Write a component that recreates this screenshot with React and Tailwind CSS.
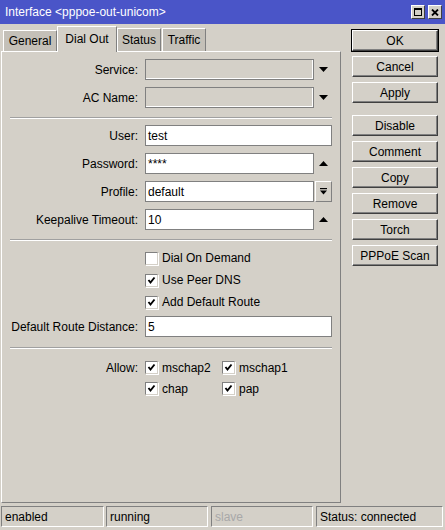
import React from "react";

function Tri({ up }) {
  return (
    <svg width="9" height="5" viewBox="0 0 9 5">
      <polygon points={up ? "0,5 9,5 4.5,0" : "0,0 9,0 4.5,5"} fill="#000" />
    </svg>
  );
}

function Check({ on }) {
  return (
    <div className="flex h-[13px] w-[13px] shrink-0 items-center justify-center border border-t-[#808080] border-l-[#808080] border-b-[#d4d0c8] border-r-[#d4d0c8] bg-white shadow-[1px_1px_0_#fff]">
      {on ? (
        <svg width="9" height="9" viewBox="0 0 9 9">
          <polyline points="1.5,4 3.5,6.5 7.5,1.5" fill="none" stroke="#000" strokeWidth="1.9" />
        </svg>
      ) : null}
    </div>
  );
}

function Field({ label, value, trailing, full, disabled }) {
  return (
    <div className="flex h-[21px] items-center">
      <div className="w-[136px] text-right">{label}</div>
      <div
        className={`ml-[7px] flex h-[21px] items-center border border-[#808080] pl-[2px] ${
          full ? "w-[187px]" : "w-[169px]"
        } ${disabled ? "bg-[#d4d0c8] shadow-[inset_-1px_-1px_0_#fff]" : "bg-white"}`}
      >
        {value}
      </div>
      {trailing === "down" ? (
        <div className="flex w-[19px] justify-center">
          <Tri />
        </div>
      ) : null}
      {trailing === "up" ? (
        <div className="flex w-[19px] justify-center">
          <Tri up />
        </div>
      ) : null}
      {trailing === "button" ? (
        <div className="ml-[1px] flex h-[21px] w-[17px] flex-col items-center justify-center border border-t-white border-l-white border-b-[#808080] border-r-[#808080]">
          <svg width="7" height="7" viewBox="0 0 7 7">
            <rect x="0" y="0" width="7" height="1.2" fill="#000" />
            <polygon points="0,2.5 7,2.5 3.5,6.5" fill="#000" />
          </svg>
        </div>
      ) : null}
    </div>
  );
}

function Separator({ top = 9, bottom = 6 }) {
  return (
    <div style={{ paddingTop: top, paddingBottom: bottom }}>
      <div className="ml-[8px] w-[322px] border-t border-b border-t-[#a0a0a0] border-b-white" />
    </div>
  );
}

function CheckRow({ label, on, h = "h-[22px]" }) {
  return (
    <div className={`flex ${h} items-center pl-[143px]`}>
      <Check on={on} />
      <span className="ml-[4px]">{label}</span>
    </div>
  );
}

function Btn({ children, primary, className = "" }) {
  return (
    <div className={`${primary ? "border border-black" : "border border-transparent"} h-[23px] w-[88px] ${className}`}>
      <div className="flex h-full w-full items-center justify-center border border-t-white border-l-white border-b-[#404040] border-r-[#404040] bg-[#d4d0c8] shadow-[inset_-1px_-1px_0_#808080]">
        {children}
      </div>
    </div>
  );
}

function Tab({ children, active, className = "" }) {
  return (
    <div
      className={`flex items-center justify-center border-t border-l border-r border-t-white border-l-white border-r-[#808080] ${
        active ? "relative z-10 -mb-px bg-[#d4d0c8] pb-[2px]" : "bg-[#c4c0b8]"
      } ${className}`}
    >
      {children}
    </div>
  );
}

function Cell({ children, className = "" }) {
  return (
    <div className={`flex h-[21px] items-center border border-t-[#808080] border-l-[#808080] border-b-white border-r-white pl-[3px] ${className}`}>
      {children}
    </div>
  );
}

export default function App() {
  return (
    <div className="flex h-[530px] w-[445px] flex-col overflow-hidden bg-[#d4d0c8] font-['Liberation_Sans',Arial,sans-serif] text-[12px] text-black">
      <div className="flex h-[24px] shrink-0 items-center justify-between bg-[#4a55c8] pl-[5px] pr-[3px] text-white">
        <span>Interface &lt;pppoe-out-unicom&gt;</span>
        <div className="flex gap-[3px]">
          <div className="flex h-[14px] w-[14px] items-center justify-center border border-t-white border-l-white border-b-[#404040] border-r-[#404040] bg-[#d4d0c8]">
            <svg width="8" height="8" viewBox="0 0 8 8">
              <rect x="0.5" y="0.5" width="7" height="7" fill="none" stroke="#000" />
              <rect x="0" y="0" width="8" height="2" fill="#000" />
            </svg>
          </div>
          <div className="flex h-[14px] w-[14px] items-center justify-center border border-t-white border-l-white border-b-[#404040] border-r-[#404040] bg-[#d4d0c8]">
            <svg width="8" height="7" viewBox="0 0 8 7">
              <path d="M1 0.5 L7 6.5 M7 0.5 L1 6.5" stroke="#000" strokeWidth="1.8" />
            </svg>
          </div>
        </div>
      </div>

      <div className="flex h-[479px]">
        <div className="flex w-[341px] flex-col">
          <div className="flex h-[27px] items-end pl-[3px]">
            <Tab className="h-[21px] w-[54px]">General</Tab>
            <Tab active className="h-[26px] w-[60px]">Dial Out</Tab>
            <Tab className="h-[23px] w-[44px]">Status</Tab>
            <Tab className="ml-[1px] h-[23px] w-[44px]">Traffic</Tab>
          </div>
          <div className="ml-[1px] h-[452px] w-[340px] border border-t-white border-l-white border-b-[#808080] border-r-[#808080] pt-[7px]">
            <div className="flex flex-col gap-[7px]">
              <Field label="Service:" value="" trailing="down" disabled />
              <Field label="AC Name:" value="" trailing="down" disabled />
            </div>
            <Separator top={9} bottom={6} />
            <div className="flex flex-col gap-[7px]">
              <Field label="User:" value="test" full />
              <Field label="Password:" value="****" trailing="up" />
              <Field label="Profile:" value="default" trailing="button" />
              <Field label="Keepalive Timeout:" value="10" trailing="up" />
            </div>
            <Separator top={9} bottom={6} />
            <CheckRow label="Dial On Demand" />
            <CheckRow label="Use Peer DNS" on />
            <CheckRow label="Add Default Route" on />
            <div className="mt-[3px]">
              <Field label="Default Route Distance:" value="5" full />
            </div>
            <Separator top={10} bottom={8} />
            <div className="flex h-[21px] items-center">
              <div className="w-[136px] text-right">Allow:</div>
              <div className="ml-[7px] flex w-[77px] items-center">
                <Check on />
                <span className="ml-[4px]">mschap2</span>
              </div>
              <div className="flex items-center">
                <Check on />
                <span className="ml-[4px]">mschap1</span>
              </div>
            </div>
            <div className="flex h-[21px] items-center">
              <div className="ml-[143px] flex w-[77px] items-center">
                <Check on />
                <span className="ml-[4px]">chap</span>
              </div>
              <div className="flex items-center">
                <Check on />
                <span className="ml-[4px]">pap</span>
              </div>
            </div>
          </div>
        </div>

        <div className="ml-[10px] flex flex-col gap-[3px] pt-[5px]">
          <Btn primary>OK</Btn>
          <Btn>Cancel</Btn>
          <Btn>Apply</Btn>
          <Btn className="mt-[7px]">Disable</Btn>
          <Btn>Comment</Btn>
          <Btn>Copy</Btn>
          <Btn>Remove</Btn>
          <Btn>Torch</Btn>
          <Btn>PPPoE Scan</Btn>
        </div>
      </div>

      <div className="flex h-[27px] pt-[3px] pl-[1px]">
        <Cell className="w-[103px]">enabled</Cell>
        <Cell className="ml-[2px] w-[102px]">running</Cell>
        <Cell className="ml-[3px] w-[102px] text-[#a8a8a8]">slave</Cell>
        <Cell className="ml-[3px] w-[127px]">Status: connected</Cell>
      </div>
    </div>
  );
}
